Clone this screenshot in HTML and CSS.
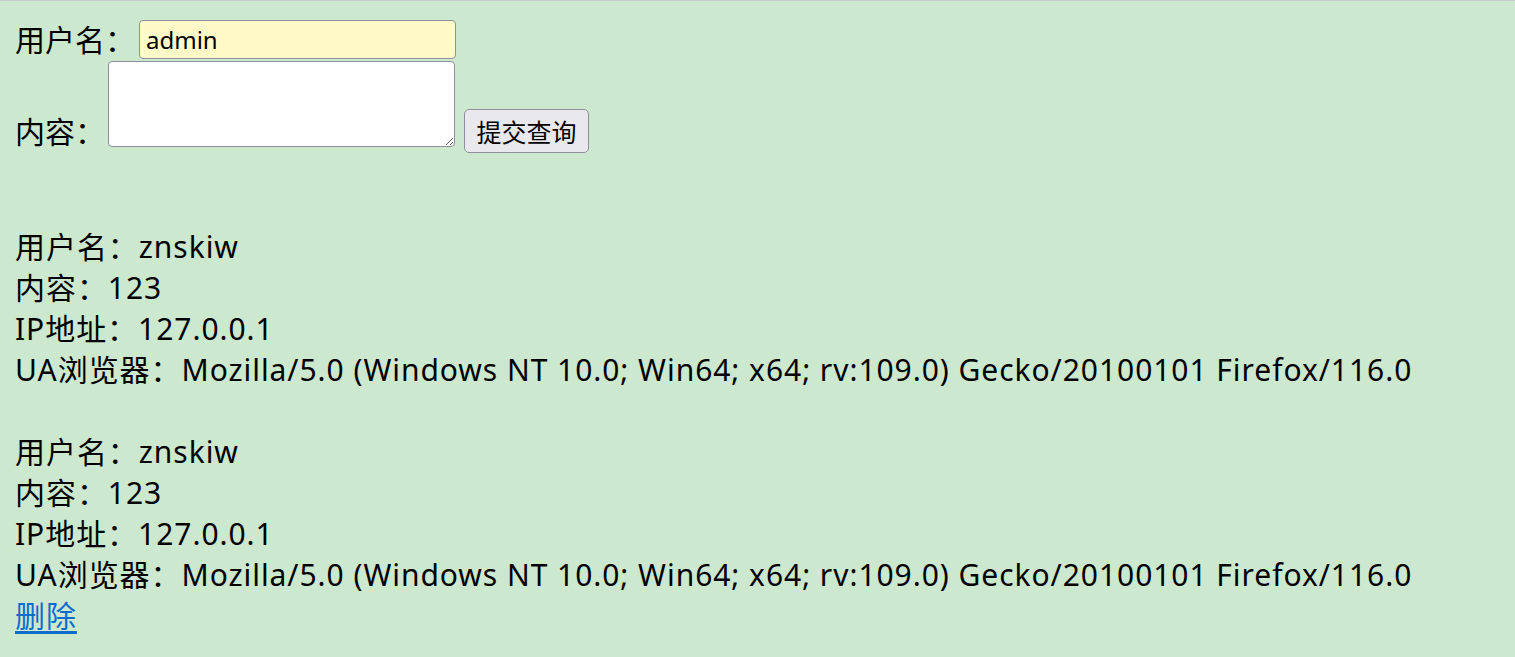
FILE: index.html
```html
<!DOCTYPE html>
<html lang="zh">
<head>
<meta charset="utf-8">
<title>留言板</title>
<link rel="stylesheet" href="styles.css">
</head>
<body>
<form class="form">
  <div class="row row-user">
    <span class="label">用户名：</span><input class="field" type="text" value="admin">
  </div>
  <div class="row row-content">
    <span class="label label-content">内容：</span><textarea class="area"></textarea><button class="submit" type="button">提交查询</button>
  </div>
</form>
<div class="records">
  <div class="record">
    <div class="line">用户名：znskiw</div>
    <div class="line">内容：123</div>
    <div class="line">IP地址：127.0.0.1</div>
    <div class="line">UA浏览器：Mozilla/5.0 (Windows NT 10.0; Win64; x64; rv:109.0) Gecko/20100101 Firefox/116.0</div>
  </div>
  <div class="record">
    <div class="line">用户名：znskiw</div>
    <div class="line">内容：123</div>
    <div class="line">IP地址：127.0.0.1</div>
    <div class="line">UA浏览器：Mozilla/5.0 (Windows NT 10.0; Win64; x64; rv:109.0) Gecko/20100101 Firefox/116.0</div>
    <div class="line"><a class="del" href="#">删除</a></div>
  </div>
</div>
</body>
</html>
```
FILE: styles.css
```css
html, body {
  margin: 0;
  padding: 0;
}
body {
  background: #cce8cf;
  border-top: 1px solid #c8c8c8;
  font-family: "Noto Sans", "Noto Sans CJK SC", sans-serif;
  font-size: 30px;
  line-height: 41px;
  color: #000;
  padding: 0 15px;
}
.form {
  margin: 0;
  padding-top: 18px;
}
.row {
  display: flex;
}
.row-user {
  align-items: center;
  height: 41px;
}
.row-content {
  align-items: flex-start;
  margin-top: 1px;
}
.label {
  white-space: nowrap;
}
.label-content {
  margin-top: 50px;
}
.field {
  margin-left: 4px;
  width: 317px;
  height: 39px;
  box-sizing: border-box;
  border: 1px solid #8f8f9d;
  border-radius: 4px;
  background: #fffac8;
  font-family: "Noto Sans", sans-serif;
  font-size: 24px;
  padding: 0 6px;
  color: #000;
}
.area {
  margin-left: 3px;
  width: 347px;
  height: 86px;
  box-sizing: border-box;
  border: 1px solid #8f8f9d;
  border-radius: 4px;
  background: #fff;
}
.submit {
  margin-left: 9px;
  margin-top: 48px;
  width: 125px;
  height: 44px;
  box-sizing: border-box;
  border: 1px solid #8f8f9d;
  border-radius: 5px;
  background: #e9e9ed;
  font-family: "Noto Sans CJK SC", sans-serif;
  font-size: 25px;
  color: #000;
  padding: 0;
}
.records {
  margin-top: 73px;
}
.record + .record {
  margin-top: 41px;
}
.line {
  white-space: nowrap;
  letter-spacing: 0.95px;
}
.del {
  color: #0a6ccf;
  text-decoration: underline;
  text-underline-offset: 4px;
}
```
